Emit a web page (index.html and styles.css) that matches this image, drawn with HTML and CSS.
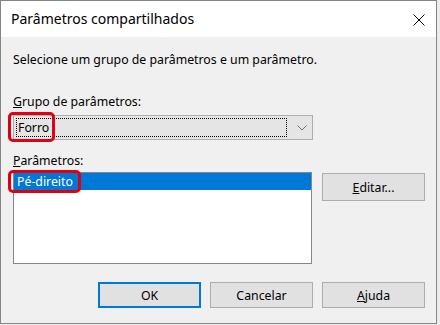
FILE: index.html
```html
<!DOCTYPE html>
<html lang="pt">
<head>
    <meta charset="UTF-8">
    <title>Parâmetros compartilhados</title>
    <link rel="stylesheet" href="styles.css">
</head>
<body>
    <div class="window">
        <div class="titlebar">
            <span class="title">Parâmetros compartilhados</span>
            <svg class="close" width="12" height="12" viewBox="0 0 12 12">
                <path d="M0.5 0.5 L11.5 11.5 M11.5 0.5 L0.5 11.5" stroke="#000" stroke-width="1" fill="none"/>
            </svg>
        </div>

        <div class="content">
            <p class="intro">Selecione um grupo de parâmetros e um parâmetro.</p>

            <label class="field-label"><u>G</u>rupo de parâmetros:</label>
            <div class="combo">
                <span class="combo-focus">Forro</span>
                <svg class="chevron" width="10" height="6" viewBox="0 0 10 6">
                    <path d="M0.5 0.5 L5 5 L9.5 0.5" stroke="#707070" stroke-width="1" fill="none"/>
                </svg>
                <div class="mark mark-combo"></div>
            </div>

            <label class="field-label label-params"><u>P</u>arâmetros:</label>
            <div class="param-row">
                <div class="listbox">
                    <div class="list-item selected">Pé-direito</div>
                    <div class="mark mark-list"></div>
                </div>
                <button class="btn btn-edit"><u>E</u>ditar...</button>
            </div>

            <div class="actions">
                <button class="btn btn-default">OK</button>
                <button class="btn">Cancelar</button>
                <button class="btn"><u>A</u>juda</button>
            </div>
        </div>
    </div>
</body>
</html>
```

FILE: styles.css
```css
body {
    margin: 0;
    background: #ececec;
    font-family: "Noto Sans", sans-serif;
    font-size: 12.3px;
    color: #000;
}
.window {
    width: 435px;
    height: 322px;
    border: 1px solid #858585;
    background: #f0f0f0;
}
.titlebar {
    height: 36px;
    background: #fff;
    display: flex;
    align-items: center;
    justify-content: space-between;
    padding: 0 11px 0 10px;
}
.title {
    font-size: 14px;
    margin-top: -1px;
}
.close {
    display: block;
    margin-top: 1px;
}
.content {
    padding: 15px 11px 0 12px;
}
.intro {
    margin: 0;
    line-height: 16px;
}
.field-label {
    display: block;
    line-height: 16px;
    margin-top: 26px;
}
.label-params {
    margin-top: 13px;
}
.combo {
    position: relative;
    margin-top: 5px;
    width: 298px;
    height: 23px;
    border: 1px solid #adadad;
    background: #e5e5e5;
    display: flex;
    align-items: center;
}
.combo-focus {
    margin-left: 2px;
    width: 268px;
    height: 17px;
    line-height: 17px;
    padding-left: 1px;
    border: 1px dotted #000;
}
.chevron {
    display: block;
    margin-left: 10px;
}
.mark {
    position: absolute;
    border: 3px solid #e0000f;
    border-radius: 5px;
    box-sizing: border-box;
}
.mark-combo {
    left: -6px;
    top: -4px;
    width: 47px;
    height: 30px;
}
.param-row {
    display: flex;
    align-items: flex-start;
    margin-top: 3px;
}
.listbox {
    position: relative;
    width: 297px;
    height: 90px;
    border: 1px solid #828790;
    background: #fff;
}
.list-item {
    height: 17px;
    line-height: 17px;
    padding-left: 3px;
}
.selected {
    background: #0078d7;
    color: #fff;
}
.mark-list {
    left: -6px;
    top: -3px;
    width: 73px;
    height: 23px;
}
.btn {
    width: 103px;
    height: 26px;
    border: 1px solid #adadad;
    background: #e1e1e1;
    font-family: "Noto Sans", sans-serif;
    font-size: 12.3px;
    color: #000;
    padding: 0;
}
.btn-edit {
    margin-left: 10px;
    margin-top: 1px;
    height: 28px;
}
.btn-default {
    border: 2px solid #0078d7;
}
.actions {
    display: flex;
    justify-content: flex-end;
    gap: 9px;
    margin-top: 18px;
}
```
